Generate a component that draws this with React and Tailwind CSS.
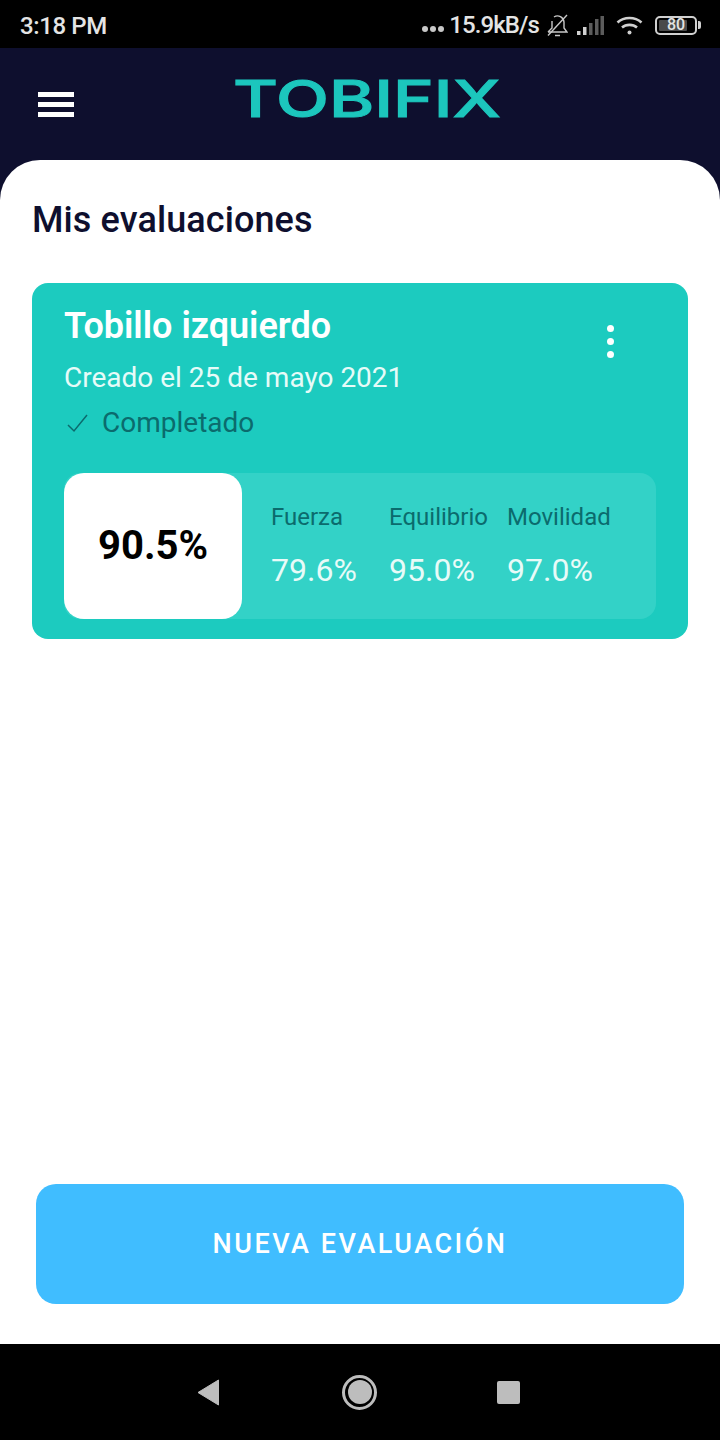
import React from "react";

const roboto = { fontFamily: "Roboto, sans-serif" };

function Stat({ label, value }) {
  return (
    <div className="w-[118px] shrink-0">
      <div className="text-[24px] leading-[28px] text-[#0b6b6d] whitespace-nowrap">{label}</div>
      <div className="mt-[21px] text-[32px] leading-[36px] text-[#e8fbf8] whitespace-nowrap">{value}</div>
    </div>
  );
}

export default function App() {
  return (
    <div className="w-[720px] h-[1440px] flex flex-col bg-black overflow-hidden" style={roboto}>
      {/* status bar */}
      <div className="h-[48px] shrink-0 bg-black flex items-center justify-between pl-[20px] pr-[19px] text-[#e4e4e4]">
        <span className="text-[24px] font-medium leading-none tracking-[-0.4px] mt-[3px]">3:18 PM</span>
        <div className="flex items-center mt-[2px]">
          <span className="flex items-center gap-[2px] mt-[7px]">
            <i className="block w-[6px] h-[6px] rounded-full bg-[#c8c8c8]" />
            <i className="block w-[6px] h-[6px] rounded-full bg-[#c8c8c8]" />
            <i className="block w-[6px] h-[6px] rounded-full bg-[#c8c8c8]" />
          </span>
          <span className="ml-[5px] text-[24px] font-medium leading-none tracking-[-0.9px]">15.9kB/s</span>
          <svg width="21" height="23" viewBox="0 0 21 23" className="ml-[8px]" fill="none" stroke="#c8c8c8" strokeWidth="1.4">
            <path d="M1 18h19l-3-4V8a6.500 6.500 0 0 0-10-5M5 7v7l-4 4M8 21.500h5" />
            <path d="M1 21.500L20 1" />
          </svg>
          <svg width="27" height="19" viewBox="0 0 27 19" className="ml-[9px]">
            <rect x="0" y="15" width="3.500" height="4" fill="#d0d0d0" />
            <rect x="6" y="11" width="3.500" height="8" fill="#d0d0d0" />
            <rect x="12" y="7" width="3.500" height="12" fill="#5c5c5c" />
            <rect x="18" y="3" width="3.500" height="16" fill="#5c5c5c" />
            <rect x="23.500" y="0" width="3.500" height="19" fill="#5c5c5c" />
          </svg>
          <svg width="27" height="19" viewBox="0 0 27 19" className="ml-[12px]" fill="none" stroke="#d0d0d0" strokeWidth="2.600">
            <path d="M1.500 6.500c6.500-6 17.500-6 24 0" />
            <path d="M6 11.500c4-3.500 11-3.500 15 0" />
            <circle cx="13.500" cy="16.500" r="2" fill="#d0d0d0" stroke="none" />
          </svg>
          <div className="ml-[12px] relative w-[42px] h-[19px] rounded-[5px] border-2 border-[#d0d0d0] flex items-center">
            <div className="absolute left-[2px] top-[2px] bottom-[2px] w-[28px] rounded-[1px] bg-[#4a4a4a]" />
            <span className="relative w-full text-center text-[16px] leading-none font-medium text-[#e4e4e4]">80</span>
          </div>
          <div className="ml-[1px] w-[3px] h-[8px] rounded-r-[2px] bg-[#d0d0d0]" />
        </div>
      </div>

      {/* app */}
      <div className="flex-1 flex flex-col bg-[#0e0f2e]">
        <div className="h-[112px] shrink-0 relative">
          <div className="absolute left-[38px] top-[44px] w-[36px] flex flex-col gap-[5px]">
            <div className="h-[5px] bg-white" />
            <div className="h-[5px] bg-white" />
            <div className="h-[5px] bg-white" />
          </div>
          <svg width="280" height="50" viewBox="0 0 280 50" className="absolute left-[230px] top-[26px] overflow-visible">
            <text x="3" y="42.500" textLength="268" lengthAdjust="spacingAndGlyphs" fill="#1cc6bd" stroke="#1cc6bd" strokeWidth="1" fontFamily="Inter, sans-serif" fontWeight="500" fontSize="51">TOBIFIX</text>
          </svg>
        </div>

        <div className="flex-1 bg-white rounded-t-[40px] flex flex-col">
          <h1 className="mt-[39px] ml-[32px] text-[36px] leading-[42px] font-medium text-[#0e0f2e] tracking-[0.1px]">Mis evaluaciones</h1>

          <div className="mt-[42px] mx-[32px] h-[356px] rounded-[16px] bg-[#1ccbbf] px-[32px] pt-[21px] relative">
            <div className="text-[36px] leading-[44px] font-semibold text-white">Tobillo izquierdo</div>
            <div className="mt-[12px] text-[28px] leading-[36px] text-[#e6fbf8]">Creado el 25 de mayo 2021</div>
            <div className="mt-[9px] flex items-center text-[28px] leading-[36px] text-[#0b6b6d]">
              <svg width="24" height="24" viewBox="0 0 24 24" fill="none" stroke="#0b6b6d" strokeWidth="1.500" className="ml-[2px]">
                <path d="M2 14l6 6L21 4" />
              </svg>
              <span className="ml-[12px]">Completado</span>
            </div>
            <div className="absolute right-[74px] top-[42px] flex flex-col gap-[6px]">
              <i className="block w-[7px] h-[7px] rounded-full bg-white" />
              <i className="block w-[7px] h-[7px] rounded-full bg-white" />
              <i className="block w-[7px] h-[7px] rounded-full bg-white" />
            </div>

            <div className="mt-[32px] h-[146px] rounded-[16px] bg-[#33d2c7] flex items-center">
              <div className="w-[178px] h-full rounded-[20px] bg-white flex items-center justify-center text-[40px] font-bold text-black shrink-0">90.5%</div>
              <div className="flex ml-[29px] mt-[-2px]">
                <Stat label="Fuerza" value="79.6%" />
                <Stat label="Equilibrio" value="95.0%" />
                <Stat label="Movilidad" value="97.0%" />
              </div>
            </div>
          </div>

          <div className="mt-auto mb-[40px] mx-[36px] h-[120px] rounded-[20px] bg-[#40bdff] flex items-center justify-center text-white text-[27px] font-medium tracking-[2.500px]">NUEVA EVALUACIÓN</div>
        </div>
      </div>

      {/* nav bar */}
      <div className="h-[96px] shrink-0 bg-black flex items-center pl-[197px]">
        <svg width="22" height="27" viewBox="0 0 22 27"><path d="M21.500 1v25L1 13.500z" fill="#bdbdbd" stroke="#bdbdbd" strokeLinejoin="round" /></svg>
        <div className="ml-[123px] w-[35px] h-[35px] rounded-full border-[3px] border-[#bdbdbd] flex items-center justify-center">
          <div className="w-[24px] h-[24px] rounded-full bg-[#bdbdbd] shrink-0" />
        </div>
        <div className="ml-[120px] w-[23px] h-[23px] rounded-[2px] bg-[#bdbdbd]" />
      </div>
    </div>
  );
}
